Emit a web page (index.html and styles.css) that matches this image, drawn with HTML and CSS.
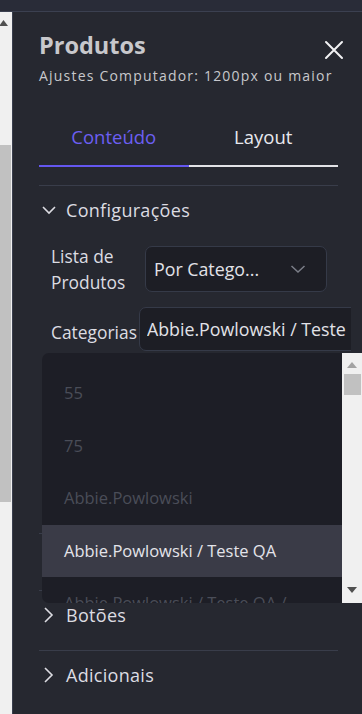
FILE: index.html
```html
<!DOCTYPE html>
<html lang="pt">
<head>
<meta charset="utf-8">
<link rel="stylesheet" href="styles.css">
</head>
<body>
<div class="topbar"></div>
<div class="main">
  <div class="side-scroll">
    <svg class="arrow-up-left" width="8" height="6" viewBox="0 0 8 6"><polygon points="3.5,0 8,6 -1,6" fill="#505050"/></svg>
    <div class="side-thumb"></div>
  </div>
  <div class="panel">
    <div class="header">
      <div class="titles">
        <div class="title">Produtos</div>
        <div class="subtitle">Ajustes Computador: 1200px ou maior</div>
      </div>
      <svg class="close" width="20" height="20" viewBox="0 0 20 20"><path d="M2 2 L18 18 M18 2 L2 18" stroke="#f2f2f4" stroke-width="2" stroke-linecap="round"/></svg>
    </div>
    <div class="tabs">
      <div class="tab active">Conteúdo</div>
      <div class="tab">Layout</div>
    </div>
    <div class="section open">
      <div class="sec-head">
        <svg class="chev" width="14" height="14" viewBox="0 0 14 14"><path d="M1 4 L7 10 L13 4" fill="none" stroke="#dcdce2" stroke-width="1.6"/></svg>
        <span>Configurações</span>
      </div>
      <div class="row row-list">
        <div class="label label-list">Lista de Produtos</div>
        <div class="select">
          <span>Por Catego...</span>
          <svg width="16" height="16" viewBox="0 0 16 16"><path d="M1.5 5 L8 11 L14.5 5" fill="none" stroke="#7b7e88" stroke-width="1.5"/></svg>
        </div>
      </div>
      <div class="row row-cat">
        <div class="label label-cat">Categorias</div>
        <div class="input"><span class="input-text">Abbie.Powlowski / Teste QA</span></div>
      </div>
    </div>
    <div class="section hidden-sec"></div>
    <div class="section">
      <div class="sec-head">
        <svg class="chev" width="14" height="16" viewBox="0 0 14 16"><path d="M3 1 L10 8 L3 15" fill="none" stroke="#dcdce2" stroke-width="1.6"/></svg>
        <span>Botões</span>
      </div>
    </div>
    <div class="section">
      <div class="sec-head">
        <svg class="chev" width="14" height="16" viewBox="0 0 14 16"><path d="M3 1 L10 8 L3 15" fill="none" stroke="#dcdce2" stroke-width="1.6"/></svg>
        <span>Adicionais</span>
      </div>
    </div>
  </div>
</div>
<div class="dropdown">
  <div class="options">
    <div class="opt">55</div>
    <div class="opt">75</div>
    <div class="opt">Abbie.Powlowski</div>
    <div class="opt hl">Abbie.Powlowski / Teste QA</div>
    <div class="opt">Abbie.Powlowski / Teste QA /</div>
  </div>
  <div class="dd-scroll">
    <svg class="dd-up" width="10" height="6" viewBox="0 0 10 6"><polygon points="5,0 10,6 0,6" fill="#a3a3a3"/></svg>
    <div class="dd-thumb"></div>
    <svg class="dd-down" width="10" height="6" viewBox="0 0 10 6"><polygon points="0,0 10,0 5,6" fill="#505050"/></svg>
  </div>
</div>
</body>
</html>
```
FILE: styles.css
```css
* { box-sizing: border-box; }
html, body { margin: 0; padding: 0; }
body {
  width: 362px;
  height: 714px;
  overflow: hidden;
  background: #262830;
  font-family: "Open Sans", "Noto Sans", sans-serif;
  color: #dcdce2;
  position: relative;
}
.topbar {
  height: 12px;
  background: #292c38;
  border-bottom: 1px solid #3b4050;
}
.main {
  display: flex;
  height: 702px;
}
.side-scroll {
  width: 12px;
  flex: none;
  background: #f0f0f0;
  position: relative;
}
.arrow-up-left { position: absolute; left: 0; top: 8px; }
.side-thumb {
  position: absolute;
  left: 0;
  width: 11px;
  top: 133px;
  height: 357px;
  background: #c1c1c1;
}
.panel {
  flex: 1;
  border-left: 1px solid #3a3f4e;
  padding: 18px 24px 0 26px;
  min-width: 0;
}
.header {
  display: flex;
  justify-content: space-between;
  align-items: flex-start;
}
.title {
  font-size: 23.5px;
  font-weight: 700;
  color: #c8c8cc;
  line-height: 30px;
}
.subtitle {
  font-size: 14px;
  color: #c8c8cc;
  letter-spacing: 1.2px;
  line-height: 20px;
  margin-top: 6px;
  white-space: nowrap;
}
.close { margin-top: 10px; margin-right: -6px; margin-left: -40px; flex: none; }
.tabs {
  display: flex;
  margin-top: 38px;
}
.tab {
  flex: 1;
  text-align: center;
  font-size: 18.5px;
  line-height: 26px;
  padding-bottom: 15px;
  color: #e8e8ee;
  border-bottom: 2px solid #e2e2e6;
}
.tab.active {
  color: #6c5ff2;
  border-bottom-color: #6457f0;
}
.section {
  border-top: 1px solid #393d4a;
}
.tabs + .section { margin-top: 18px; }
.sec-head {
  display: flex;
  align-items: center;
  gap: 10px;
  padding: 11px 0 22px 3px;
  font-size: 18px;
  line-height: 26px;
  letter-spacing: 0.3px;
  color: #dcdce2;
}
.section.open .sec-head { padding-bottom: 0; }
.chev { flex: none; }
.row {
  display: flex;
  align-items: center;
  padding-left: 12px;
}
.row-list { margin-top: 20px; }
.label {
  font-size: 17.4px;
  line-height: 26px;
  color: #dcdce2;
  flex: none;
}
.label-list { width: 94px; }
.label-cat { margin-top: 5px; }
.select {
  width: 182px;
  height: 46px;
  background: #1d1e25;
  border: 1px solid #353a48;
  border-radius: 7px;
  display: flex;
  align-items: center;
  justify-content: space-between;
  padding: 0 20px 0 8px;
  font-size: 17.8px;
  color: #e2e2e8;
}
.row-cat {
  margin-top: 12px;
  margin-right: -13px;
  overflow: hidden;
  gap: 2px;
  margin-bottom: 182px;
}
.input {
  flex: none;
  width: 280px;
  height: 44px;
  background: #1d1e25;
  border: 1px solid #353a48;
  border-radius: 7px;
  padding: 0 7px;
  display: flex;
  align-items: center;
  font-size: 17.8px;
  color: #e2e2e8;
  white-space: nowrap;
}
.input-text {
  display: block;
  width: 200px;
  overflow: hidden;
}
.hidden-sec { height: 57px; }
.dropdown {
  position: absolute;
  left: 42px;
  top: 353px;
  width: 320px;
  height: 250px;
  display: flex;
}
.options {
  flex: 1;
  background: #1d1e26;
  border-radius: 7px 0 0 7px;
  overflow: hidden;
  padding-top: 14px;
}
.opt {
  height: 52.5px;
  line-height: 52.5px;
  padding-left: 22px;
  font-size: 16.5px;
  color: #4a4d58;
  white-space: nowrap;
}
.opt.hl {
  background: #3a3b47;
  color: #e4e4ea;
}
.dd-scroll {
  width: 20px;
  flex: none;
  background: #f0f0f0;
  position: relative;
}
.dd-up { position: absolute; left: 5px; top: 9px; }
.dd-down { position: absolute; left: 5px; top: 234px; }
.dd-thumb {
  position: absolute;
  left: 2px;
  right: 1px;
  top: 21px;
  height: 21px;
  background: #c1c1c1;
}
```
